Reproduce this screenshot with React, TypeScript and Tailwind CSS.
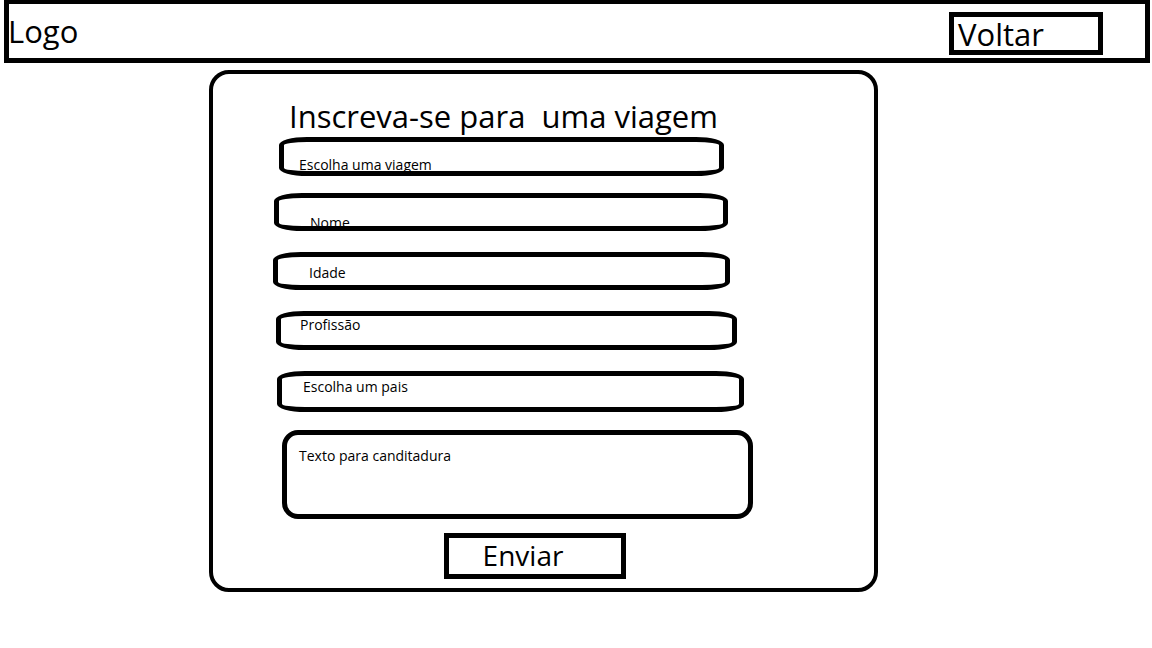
import React from 'react';

const font = { fontFamily: '"Open Sans", Lato, sans-serif' };

type Field = { label: string; box: string; text: string };

const fields: Field[] = [
  { label: 'Escolha uma viagem', box: 'mt-[5px] ml-[66px] w-[445px] h-[39px]', text: 'pt-[16px] pl-[15px]' },
  { label: 'Nome', box: 'mt-[17px] ml-[61px] w-[454px] h-[38px]', text: 'pt-[18px] pl-[31px]' },
  { label: 'Idade', box: 'mt-[21px] ml-[60px] w-[457px] h-[38px]', text: 'pt-[9px] pl-[31px]' },
  { label: 'Profissão', box: 'mt-[21px] ml-[63px] w-[461px] h-[39px]', text: 'pt-[2px] pl-[19px]' },
  { label: 'Escolha um pais', box: 'mt-[21px] ml-[64px] w-[467px] h-[41px]', text: 'pt-[4px] pl-[21px]' },
];

const App: React.FC = () => {
  return (
    <div className="w-[1152px] h-[648px] bg-white text-black overflow-hidden" style={font}>
      {/* Top bar */}
      <header className="ml-[4px] w-[1146px] h-[63px] border-[5px] border-t-4 border-black flex items-start justify-between">
        <span className="mt-[12px] -ml-px text-[31px] leading-none">Logo</span>
        <button className="mt-[8px] mr-[42px] w-[154px] h-[43px] border-[5px] border-black flex items-start pl-[4px] pt-[2px] text-[31px] leading-none">
          Voltar
        </button>
      </header>

      {/* Form card */}
      <main className="mt-[7px] ml-[209px] w-[669px] h-[522px] border-4 border-black rounded-[20px] flex flex-col items-start pt-[27px]">
        <h1 className="ml-[76px] text-[31px] leading-none whitespace-pre">Inscreva-se para  uma viagem</h1>

        {fields.map((f) => (
          <div key={f.label} className={`${f.box} border-[5px] border-black rounded-[28px/8px] ${f.text}`}>
            <span className="block text-[14px] leading-none">{f.label}</span>
          </div>
        ))}

        <div className="mt-[18px] ml-[69px] w-[471px] h-[89px] border-[5px] border-black rounded-[16px] pt-[14px] pl-[12px]">
          <span className="block text-[14px] leading-none">Texto para canditadura</span>
        </div>

        <button className="mt-[14px] ml-[231px] w-[182px] h-[46px] border-[5px] border-black flex items-center justify-center pr-[24px] pb-[3px] text-[28px] leading-none">
          Enviar
        </button>
      </main>
    </div>
  );
};

export default App;
